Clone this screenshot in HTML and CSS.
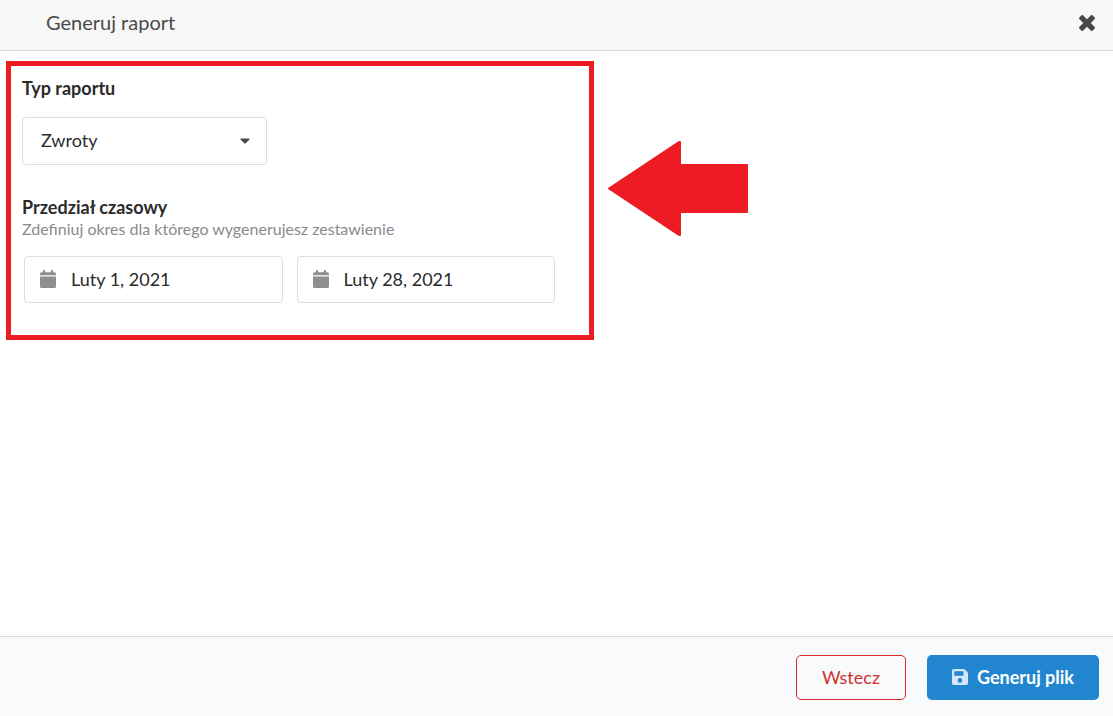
FILE: index.html
```html
<!DOCTYPE html>
<html lang="pl">
<head>
    <meta charset="UTF-8">
    <meta name="viewport" content="width=device-width, initial-scale=1.0">
    <title>Generuj raport</title>
    <link rel="stylesheet" href="styles.css">
</head>
<body>
    <form class="modal">
        <header class="modal-header">
            <h1 class="modal-title">Generuj raport</h1>
            <button type="button" class="close-btn" aria-label="Zamknij">
                <svg viewBox="0 0 18 18" width="18" height="18"><path d="M4.3 2L9 6.7L13.7 2L16 4.3L11.3 9L16 13.7L13.7 16L9 11.3L4.3 16L2 13.7L6.7 9L2 4.3Z"/></svg>
            </button>
        </header>

        <main class="modal-content">
            <!-- report options -->
            <section class="report-frame">
                <label class="field-label" for="report-type">Typ raportu</label>
                <div class="select-box">
                    <select id="report-type">
                        <option selected>Zwroty</option>
                    </select>
                    <svg class="caret" viewBox="0 0 10 6" width="10" height="6"><path d="M1 0.5H9Q10 1 9.3 1.8L5.7 5.3Q5 6 4.3 5.3L0.7 1.8Q0 1 1 0.5Z"/></svg>
                </div>

                <fieldset class="range">
                    <legend class="field-label">Przedział czasowy</legend>
                    <p class="hint">Zdefiniuj okres dla którego wygenerujesz zestawienie</p>
                    <div class="dates">
                        <label class="date-box">
                            <svg viewBox="0 0 16 18" width="16" height="18"><path d="M0 5.2V3.7Q0 2.2 1.5 2.2H3V.6Q3 0 3.6 0H4.6Q5.2 0 5.2 .6V2.2H10.8V.6Q10.8 0 11.4 0H12.4Q13 0 13 .6V2.2H14.5Q16 2.2 16 3.7V5.2ZM0 6.4H16V16.5Q16 18 14.5 18H1.5Q0 18 0 16.5Z"/></svg>
                            <input type="text" value="Luty 1, 2021" aria-label="Data od">
                        </label>
                        <label class="date-box">
                            <svg viewBox="0 0 16 18" width="16" height="18"><path d="M0 5.2V3.7Q0 2.2 1.5 2.2H3V.6Q3 0 3.6 0H4.6Q5.2 0 5.2 .6V2.2H10.8V.6Q10.8 0 11.4 0H12.4Q13 0 13 .6V2.2H14.5Q16 2.2 16 3.7V5.2ZM0 6.4H16V16.5Q16 18 14.5 18H1.5Q0 18 0 16.5Z"/></svg>
                            <input type="text" value="Luty 28, 2021" aria-label="Data do">
                        </label>
                    </div>
                </fieldset>
            </section>

            <svg class="arrow" viewBox="0 0 140 96" width="140" height="96"><path d="M1 47.5L71 1H72V24H139V71H72V94H71Z"/></svg>
        </main>

        <footer class="modal-footer">
            <button type="button" class="btn btn-back">Wstecz</button>
            <button type="submit" class="btn btn-primary">
                <svg viewBox="0 0 16 16" width="16" height="16"><path fill-rule="evenodd" d="M1.7 0H11.6Q12.3 0 12.8 .5L15.5 3.2Q16 3.7 16 4.4V14.3Q16 16 14.3 16H1.7Q0 16 0 14.3V1.7Q0 0 1.7 0ZM2.9 2.3Q2.3 2.3 2.3 2.9V6.2Q2.3 6.8 2.9 6.8H10.9Q11.5 6.8 11.5 6.2V2.9Q11.5 2.3 10.9 2.3ZM8 9.1A2.3 2.3 0 1 0 8 13.7A2.3 2.3 0 1 0 8 9.1Z"/></svg>
                Generuj plik
            </button>
        </footer>
    </form>
</body>
</html>
```
FILE: styles.css
```css
* {
    margin: 0;
    padding: 0;
    box-sizing: border-box;
}

body {
    background: #fff;
    color: #2b2b2b;
    font-family: Lato, "Liberation Sans", sans-serif;
    font-size: 18px;
    line-height: 24px;
}

button, input, select {
    font: inherit;
    color: inherit;
}

button {
    cursor: pointer;
}

svg {
    display: block;
    flex-shrink: 0;
}

.modal {
    display: flex;
    flex-direction: column;
    min-height: 100vh;
}

/* header */
.modal-header {
    display: flex;
    align-items: center;
    justify-content: space-between;
    padding: 8px 17px 12px 46px;
    background: #f7f7f7;
    border-bottom: 1px solid #d4d9dd;
}

.modal-title {
    padding-bottom: 2px;
    font-size: 20px;
    font-weight: 400;
    line-height: 28px;
    color: #4a4a4a;
}

.close-btn {
    border: none;
    background: none;
}

.close-btn path {
    fill: #484848;
    stroke: #484848;
    stroke-width: 2;
    stroke-linejoin: round;
}

/* content */
.modal-content {
    display: flex;
    flex: 1;
    align-items: flex-start;
    gap: 14px;
    padding: 10px 6px;
}

.report-frame {
    width: 588px;
    padding: 10px 11px 32px;
    border: 5px solid #ed1c24;
}

.field-label {
    display: block;
    font-weight: 700;
}

.select-box {
    position: relative;
    width: 245px;
    margin-top: 17px;
}

.select-box select {
    display: block;
    width: 100%;
    height: 48px;
    padding: 0 40px 2px 18px;
    border: 1px solid #dcdddd;
    border-radius: 4px;
    background: #fff;
    appearance: none;
}

.caret {
    position: absolute;
    top: 21px;
    right: 17px;
    fill: #484848;
    pointer-events: none;
}

.range {
    margin-top: 30px;
    border: none;
}

.hint {
    font-size: 16px;
    line-height: 20px;
    color: #8a8a8a;
}

.dates {
    display: flex;
    gap: 14px;
    margin-top: 17px;
    padding: 0 23px 0 2px;
}

.date-box {
    display: flex;
    flex: 1;
    align-items: center;
    gap: 15px;
    height: 47px;
    padding: 0 15px 1px;
    border: 1px solid #dcdddd;
    border-radius: 4px;
}

.date-box svg {
    fill: #8f8f8f;
}

.date-box input {
    width: 100%;
    min-width: 0;
    border: none;
    outline: none;
    background: none;
}

.arrow {
    margin-top: 80px;
    fill: #ed1c24;
    stroke: #ed1c24;
    stroke-width: 2;
    stroke-linejoin: round;
}

/* footer */
.modal-footer {
    display: flex;
    justify-content: flex-end;
    gap: 21px;
    padding: 18px 14px 16px;
    background: #f9fafc;
    border-top: 1px solid #d8dcdf;
}

.btn {
    display: flex;
    align-items: center;
    justify-content: center;
    gap: 9px;
    min-width: 110px;
    height: 45px;
    padding: 0 24px 2px;
    border: 1px solid transparent;
    border-radius: 5px;
}

.btn-back {
    border-color: #db2828;
    background: none;
    color: #d03030;
}

.btn-primary {
    background: #2185d0;
    color: #fff;
    font-weight: 700;
}

.btn-primary svg {
    fill: #d3e7f6;
}
```
